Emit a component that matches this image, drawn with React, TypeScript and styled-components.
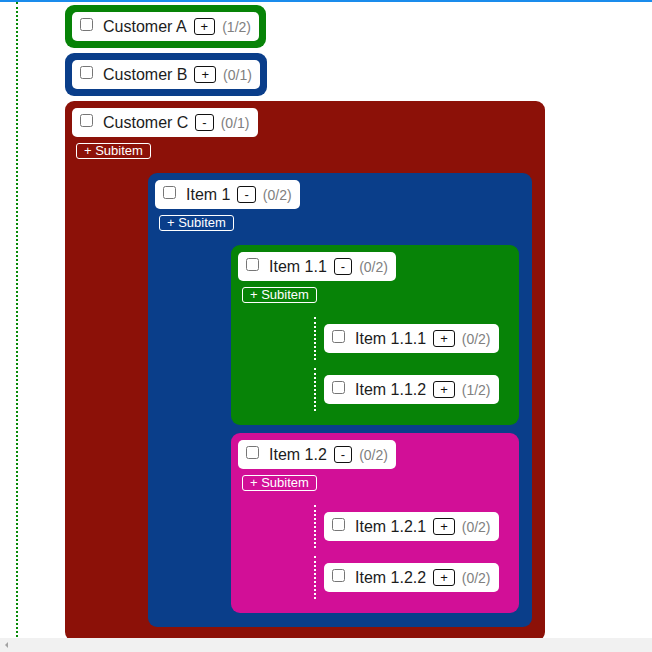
import React from "react";
import styled, { createGlobalStyle } from "styled-components";

const GlobalStyle = createGlobalStyle`
  html, body {
    margin: 0;
    padding: 0;
    background: #ffffff;
    font-family: "Liberation Sans", Arial, sans-serif;
  }
`;

type NodeData = {
  label: string;
  color?: string;
  count: string;
  expanded?: boolean;
  children?: NodeData[];
};

const GREEN = "#078307";
const BLUE = "#0a3e8a";
const RED = "#8c1108";
const MAGENTA = "#d20f97";

const data: NodeData[] = [
  { label: "Customer A", color: GREEN, count: "(1/2)" },
  { label: "Customer B", color: BLUE, count: "(0/1)" },
  {
    label: "Customer C",
    color: RED,
    count: "(0/1)",
    expanded: true,
    children: [
      {
        label: "Item 1",
        color: BLUE,
        count: "(0/2)",
        expanded: true,
        children: [
          {
            label: "Item 1.1",
            color: GREEN,
            count: "(0/2)",
            expanded: true,
            children: [
              { label: "Item 1.1.1", count: "(0/2)" },
              { label: "Item 1.1.2", count: "(1/2)" },
            ],
          },
          {
            label: "Item 1.2",
            color: MAGENTA,
            count: "(0/2)",
            expanded: true,
            children: [
              { label: "Item 1.2.1", count: "(0/2)" },
              { label: "Item 1.2.2", count: "(0/2)" },
            ],
          },
        ],
      },
    ],
  },
];

const Viewport = styled.div`
  box-sizing: border-box;
  height: 100vh;
  border-top: 2px solid #1a8cec;
  display: flex;
  flex-direction: column;
`;

const Content = styled.div`
  flex: 1;
  min-height: 0;
  overflow: hidden;
`;

const ScrollTrack = styled.div`
  flex: 0 0 14px;
  display: flex;
  align-items: center;
  padding-left: 5px;
  background: #f1f1f1;
`;

const ArrowLeft = styled.span`
  width: 0;
  height: 0;
  border-top: 3px solid transparent;
  border-bottom: 3px solid transparent;
  border-right: 3px solid #a3a3a3;
`;

const Tree = styled.div`
  margin-left: 16px;
  border-left: 2px dotted #078a07;
  padding: 3px 0 0 47px;
  display: flex;
  flex-direction: column;
  align-items: flex-start;
  gap: 5px;
`;

const Box = styled.div<{ $color?: string }>`
  box-sizing: border-box;
  display: flex;
  flex-direction: column;
  align-items: flex-start;
  background: ${(p) => p.$color ?? "transparent"};
  border-radius: ${(p) => (p.$color ? "9px" : "0")};
  border-left: ${(p) => (p.$color ? "none" : "2px dotted #ffffff")};
  padding: ${(p) => (p.$color ? "7px" : "7px 7px 7px 8px")};
`;

const Header = styled.div`
  display: inline-flex;
  align-items: center;
  box-sizing: border-box;
  height: 29px;
  padding: 0 8px;
  background: #ffffff;
  border-radius: 5px;
  white-space: nowrap;
`;

const Check = styled.input.attrs({ type: "checkbox" })`
  width: 13px;
  height: 13px;
  margin: 0;
  position: relative;
  top: -2px;
`;

const Label = styled.span`
  margin-left: 10px;
  font-size: 16px;
  color: #1c1c1c;
`;

const Toggle = styled.button`
  margin-left: 7px;
  box-sizing: border-box;
  height: 17px;
  padding: 0 6px;
  border: 1px solid #111;
  border-radius: 3px;
  background: #ffffff;
  color: #111;
  font-family: "Liberation Sans", Arial, sans-serif;
  font-size: 13px;
  line-height: 14px;
`;

const Count = styled.span`
  margin-left: 7px;
  font-size: 14px;
  color: #808080;
`;

const SubitemButton = styled.button`
  margin: 6px 0 0 4px;
  box-sizing: border-box;
  height: 16px;
  padding: 0 7px;
  border: 1px solid #ffffff;
  border-radius: 3px;
  background: transparent;
  color: #ffffff;
  font-family: "Liberation Sans", Arial, sans-serif;
  font-size: 13px;
  line-height: 14px;
`;

const Children = styled.div`
  align-self: stretch;
  display: flex;
  flex-direction: column;
  align-items: stretch;
  gap: 8px;
  margin: 14px 0 0 76px;
  padding: 0 6px 7px 0;
`;

function TreeNode({ node }: { node: NodeData }) {
  return (
    <Box $color={node.color}>
      <Header>
        <Check />
        <Label>{node.label}</Label>
        <Toggle>{node.expanded ? "-" : "+"}</Toggle>
        <Count>{node.count}</Count>
      </Header>
      {node.expanded && (
        <>
          <SubitemButton>+ Subitem</SubitemButton>
          <Children>
            {node.children?.map((c) => (
              <TreeNode key={c.label} node={c} />
            ))}
          </Children>
        </>
      )}
    </Box>
  );
}

export default function App() {
  return (
    <>
      <GlobalStyle />
      <Viewport>
        <Content>
          <Tree>
            {data.map((n) => (
              <TreeNode key={n.label} node={n} />
            ))}
          </Tree>
        </Content>
        <ScrollTrack>
          <ArrowLeft />
        </ScrollTrack>
      </Viewport>
    </>
  );
}
